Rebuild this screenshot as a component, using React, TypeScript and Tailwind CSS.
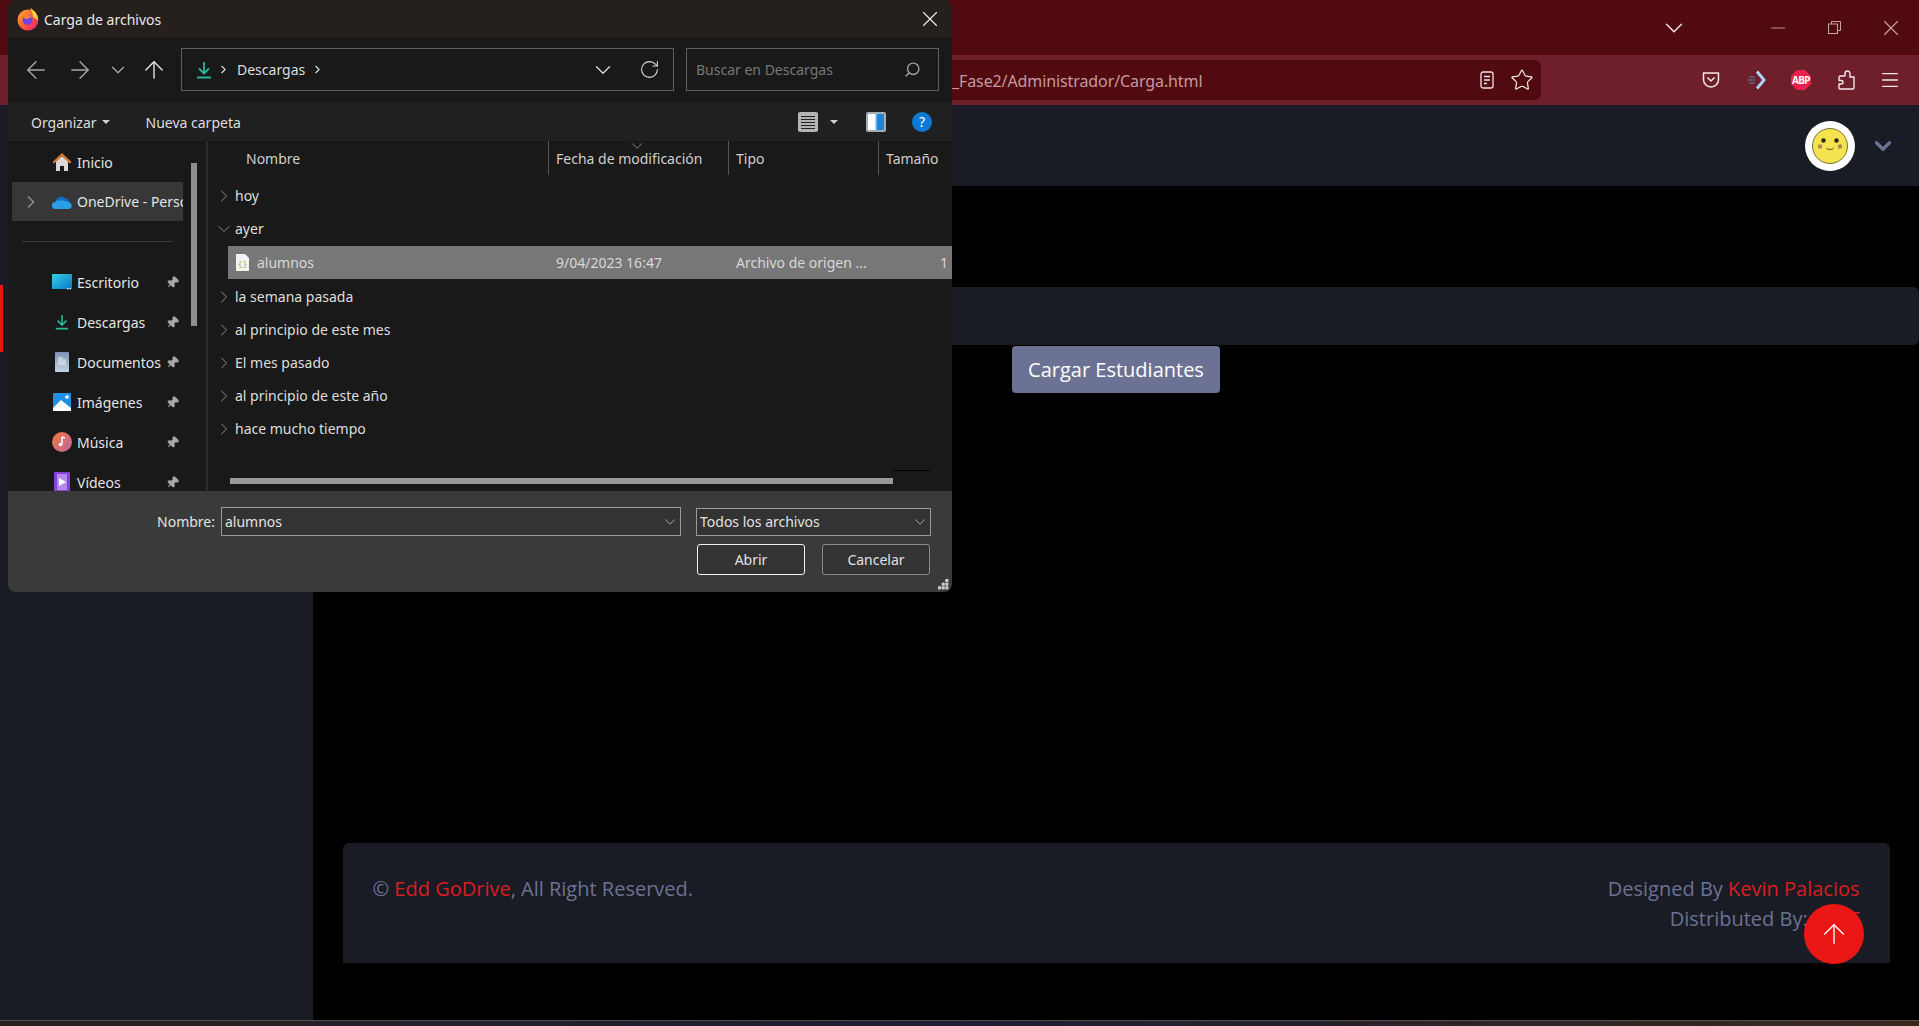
import { ArrowLeft, ArrowRight, ArrowUp, ChevronDown, ChevronRight, RotateCw, Search, X, Minus, Star, Menu, Pin } from 'lucide-react';

const uiFont = 'font-["Noto_Sans",sans-serif]';

// Dialog icons
function FirefoxLogo() {
  return (
    <svg width="24" height="24" viewBox="0 0 24 24">
      <defs>
        <linearGradient id="ff" x1="0" y1="0" x2="1" y2="1">
          <stop offset="0" stopColor="#ffb02e" />
          <stop offset="0.55" stopColor="#ff5a36" />
          <stop offset="1" stopColor="#e31587" />
        </linearGradient>
      </defs>
      <circle cx="12" cy="13" r="10.5" fill="url(#ff)" />
      <path d="M14 1c4 2 8 6 8 12l-5-3c0-3-1-6-3-9z" fill="#ffd23f" />
      <circle cx="11.5" cy="13" r="5" fill="#7542e5" />
      <path d="M7 9c3-2 7-1 9 2-2-1-3 0-5 1-2 0-3-1-4-3z" fill="#ff8a2e" />
    </svg>
  );
}

function DownloadIcon({ size = 18 }: { size?: number }) {
  return (
    <svg width={size} height={size} viewBox="0 0 18 18" fill="none" stroke="#2bb594" strokeWidth="1.8">
      <path d="M9 1v11M4 7.5 9 12.5 14 7.5" />
      <path d="M2 16.5h14" strokeWidth="2" />
    </svg>
  );
}

function HomeIcon() {
  return (
    <svg width="20" height="20" viewBox="0 0 20 20">
      <path d="M4 9.5 10 4l6 5.5V19h-4v-5H8v5H4z" fill="#d9d9d9" />
      <path d="M0.5 10 10 1l9.5 9-1.6 1.5L10 4 2.1 11.5z" fill="#d9762b" />
    </svg>
  );
}

function OneDriveIcon() {
  return (
    <svg width="20" height="14" viewBox="0 0 20 14">
      <path d="M4 7a5 5 0 0 1 9-3.4A4 4 0 0 1 17 7z" fill="#0f6fc6" />
      <path d="M3.5 14a3.5 3.5 0 0 1-.3-7c1-1.500 3-2 4.600-1.300 1.500-.8 3.700-.7 5 .600 1.200-.6 7 .5 7 4.500 0 2-1.300 3.200-3 3.200z" fill="#2a9fe8" />
    </svg>
  );
}

function DesktopIcon() {
  return (
    <svg width="20" height="16" viewBox="0 0 20 16">
      <defs>
        <linearGradient id="desk" x1="0" y1="0" x2="1" y2="1">
          <stop offset="0" stopColor="#35d0e8" />
          <stop offset="1" stopColor="#0a78c8" />
        </linearGradient>
      </defs>
      <rect width="20" height="15" rx="1" fill="url(#desk)" />
      <rect x="15" y="14" width="1.500" height="1.500" fill="#ddd" />
      <rect x="17.500" y="14" width="1.500" height="1.500" fill="#ddd" />
    </svg>
  );
}

function DocumentsIcon() {
  return (
    <svg width="14" height="20" viewBox="0 0 14 20">
      <defs>
        <linearGradient id="docs" x1="0" y1="0" x2="0" y2="1">
          <stop offset="0" stopColor="#7e93b0" />
          <stop offset="1" stopColor="#c3d3e4" />
        </linearGradient>
      </defs>
      <rect width="14" height="20" rx="1" fill="url(#docs)" />
      <path d="M3 6h5M3 8h8M3 10h8M3 12h8" stroke="#f2f2f2" strokeWidth="1" />
    </svg>
  );
}

function PicturesIcon() {
  return (
    <svg width="18" height="18" viewBox="0 0 18 18">
      <rect width="18" height="18" rx="1" fill="#1e90e6" />
      <circle cx="14" cy="4" r="1.800" fill="#fff" />
      <path d="M0 15 8 7l10 8v3H0z" fill="#fff" />
    </svg>
  );
}

function MusicIcon() {
  return (
    <svg width="20" height="20" viewBox="0 0 20 20">
      <defs>
        <linearGradient id="mus" x1="0" y1="0" x2="1" y2="1">
          <stop offset="0" stopColor="#ef7d3c" />
          <stop offset="1" stopColor="#c1609f" />
        </linearGradient>
      </defs>
      <circle cx="10" cy="10" r="10" fill="url(#mus)" />
      <path d="M10 5v7.500M10 5l3 1" stroke="#fff" strokeWidth="1.500" fill="none" />
      <circle cx="8.500" cy="12.500" r="1.800" fill="#fff" />
    </svg>
  );
}

function VideosIcon() {
  return (
    <svg width="16" height="20" viewBox="0 0 16 20">
      <rect width="16" height="20" rx="1" fill="#8b3fd9" />
      <rect x="3" y="2" width="10" height="16" fill="#b58af0" />
      <path d="M5 6v8l7-4z" fill="#fff" />
    </svg>
  );
}

function SourceFileIcon() {
  return (
    <svg width="13" height="17" viewBox="0 0 13 17">
      <path d="M0 0h9l4 4v13H0z" fill="#f3f3f3" />
      <text x="6.500" y="12" textAnchor="middle" fontSize="8" fontFamily="Liberation Mono, monospace" fill="#9ab52e">{'{}'}</text>
    </svg>
  );
}

function Caret() {
  return <span className="inline-block w-0 h-0 border-x-[4px] border-x-transparent border-t-[4px] border-t-[#cfcfcf]" />;
}

function NavItem({ icon, label, pinned, active }: { icon: React.ReactNode; label: string; pinned?: boolean; active?: boolean }) {
  return (
    <div className={`flex items-center overflow-hidden ${active ? 'h-[39px] bg-[#373737]' : 'h-[40px]'}`}>
      <span className="w-[40px] flex shrink-0 pl-[9px]">
        {active && <ChevronRight size={20} strokeWidth={2} color="#8c8c8c" />}
      </span>
      <span className="w-[20px] flex justify-center shrink-0">{icon}</span>
      <span className="ml-[5px] text-[14px] text-[#e4e4e4] whitespace-nowrap">{label}</span>
      {pinned && (
        <span className="ml-auto mr-[4px] flex">
          <Pin size={13} color="#a8a8a8" fill="#a8a8a8" className="rotate-45" />
        </span>
      )}
    </div>
  );
}

function GroupRow({ label, open }: { label: string; open?: boolean }) {
  return (
    <div className="h-[33px] flex items-center pl-[6px]">
      <span className="w-[20px] flex shrink-0">
        {open ? <ChevronDown size={20} strokeWidth={1.200} color="#8a8a8a" /> : <ChevronRight size={20} strokeWidth={1.200} color="#8a8a8a" />}
      </span>
      <span className="ml-[1px] text-[14px] text-[#dedede]">{label}</span>
    </div>
  );
}

function FileDialog() {
  return (
    <div className={`absolute left-[8px] top-0 w-[944px] h-[592px] flex flex-col rounded-lg overflow-hidden ${uiFont}`}>
      {/* title */}
      <div className="h-[38px] bg-[#25201e] flex items-center pl-[8px] pr-[9px] shrink-0">
        <FirefoxLogo />
        <span className="ml-[4px] text-[14px] text-[#e8e8e8]">Carga de archivos</span>
        <X size={26} strokeWidth={1} color="#f2f2f2" className="ml-auto" />
      </div>

      {/* nav */}
      <div className="h-[65px] bg-[#191919] flex items-center pl-[14px] pb-[2px] shrink-0">
        <ArrowLeft size={28} strokeWidth={1.200} color="#a5a5a5" />
        <ArrowRight size={28} strokeWidth={1.200} color="#a5a5a5" className="ml-[16px]" />
        <ChevronDown size={22} strokeWidth={1.500} color="#a5a5a5" className="ml-[13px]" />
        <ArrowUp size={28} strokeWidth={1.200} color="#e4e4e4" className="ml-[11px]" />
        <div className="ml-[13px] w-[493px] h-[43px] border border-[#5f5f5f] flex items-center pl-[13px] pr-[13px]">
          <DownloadIcon />
          <ChevronRight size={13} color="#dcdcdc" className="ml-[4px]" />
          <span className="ml-[7px] text-[14px] text-[#dedede]">Descargas</span>
          <ChevronRight size={13} color="#dcdcdc" className="ml-[6px]" />
          <ChevronDown size={26} strokeWidth={1.200} color="#dcdcdc" className="ml-auto" />
          <RotateCw size={21} strokeWidth={1.200} color="#dcdcdc" className="ml-[23px]" />
        </div>
        <div className="ml-[12px] w-[253px] h-[43px] border border-[#5f5f5f] flex items-center pl-[9px] pr-[17px]">
          <span className="text-[14px] text-[#787878]">Buscar en Descargas</span>
          <Search size={17} strokeWidth={2} color="#a0a0a0" className="ml-auto -scale-x-100" />
        </div>
      </div>

      {/* toolbar */}
      <div className="h-[38px] bg-[#202020] flex items-center pl-[23px] pr-[20px] shrink-0">
        <span className="text-[14px] text-[#dedede]">Organizar</span>
        <span className="ml-[5px] flex"><Caret /></span>
        <span className="ml-[36px] text-[14px] text-[#dedede]">Nueva carpeta</span>
        <div className="ml-auto w-[20px] h-[20px] rounded-[2px] bg-[#b4b4b4] flex flex-col justify-center gap-[2px] px-[3px]">
          <span className="h-[1px] bg-[#222]" />
          <span className="h-[1px] bg-[#222]" />
          <span className="h-[1px] bg-[#222]" />
          <span className="h-[1px] bg-[#222]" />
          <span className="h-[1px] bg-[#222]" />
        </div>
        <span className="ml-[12px] flex"><Caret /></span>
        <div className="ml-[28px] w-[20px] h-[20px] rounded-[2px] border-2 border-[#a5adb5] bg-gradient-to-r from-white from-40% to-[#1b86d8] to-60%" />
        <div className="ml-[26px] w-[20px] h-[20px] rounded-full bg-[#0f7ad6] text-white text-[14px] leading-[20px] text-center">?</div>
      </div>

      {/* body */}
      <div className="h-[350px] bg-[#191919] flex shrink-0">
        {/* left nav */}
        <div className="w-[198px] h-full flex shrink-0 overflow-hidden">
          <div className="w-[171px] ml-[4px] shrink-0">
            <div className="mt-[1px]"><NavItem icon={<HomeIcon />} label="Inicio" /></div>
            <NavItem icon={<OneDriveIcon />} label="OneDrive - Personal" active />
            <div className="h-[41px] flex items-center pl-[10px] pr-[10px]"><div className="h-px w-full bg-[#3a3a3a]" /></div>
            <NavItem icon={<DesktopIcon />} label="Escritorio" pinned />
            <NavItem icon={<DownloadIcon size={16} />} label="Descargas" pinned />
            <NavItem icon={<DocumentsIcon />} label="Documentos" pinned />
            <NavItem icon={<PicturesIcon />} label="Imágenes" pinned />
            <NavItem icon={<MusicIcon />} label="Música" pinned />
            <NavItem icon={<VideosIcon />} label="Vídeos" pinned />
          </div>
          <div className="ml-[8px] mt-[22px] w-[6px] h-[163px] bg-[#8f8f8f] shrink-0" />
        </div>
        <div className="w-[2px] h-full bg-[#2b2b2b] shrink-0" />

        {/* files */}
        <div className="flex-1 min-w-0 flex flex-col">
          <div className="h-[34px] mb-[4px] flex items-stretch text-[14px] text-[#cfcfcf] shrink-0 relative">
            <div className="w-[340px] pl-[38px] flex items-center">Nombre</div>
            <div className="w-[180px] pl-[7px] flex items-center border-l border-[#555]">Fecha de modificación</div>
            <div className="w-[150px] pl-[7px] flex items-center border-l border-[#555]">Tipo</div>
            <div className="flex-1 pl-[7px] flex items-center border-l border-[#555] whitespace-nowrap">Tamaño</div>
            <ChevronDown size={18} strokeWidth={1} color="#a5a5a5" className="absolute left-[420px] -top-[4px]" />
          </div>
          <GroupRow label="hoy" />
          <GroupRow label="ayer" open />
          <div className="ml-[20px] h-[33px] mt-[1px] mb-[1px] bg-[#777777] flex items-center text-[14px] text-[#d8d8d8] whitespace-nowrap overflow-hidden shrink-0">
            <span className="ml-[8px] flex"><SourceFileIcon /></span>
            <span className="ml-[8px] w-[299px] shrink-0">alumnos</span>
            <span className="w-[180px] shrink-0">9/04/2023 16:47</span>
            <span className="w-[204px] shrink-0">Archivo de origen ...</span>
            <span>1</span>
          </div>
          <GroupRow label="la semana pasada" />
          <GroupRow label="al principio de este mes" />
          <GroupRow label="El mes pasado" />
          <GroupRow label="al principio de este año" />
          <GroupRow label="hace mucho tiempo" />
          <div className="ml-[22px] mt-[33px] flex items-start">
            <div className="w-[663px] h-[6px] bg-[#999999]" />
            <div className="w-[37px] h-px bg-black -mt-[8px]" />
          </div>
        </div>
      </div>

      {/* bottom */}
      <div className="flex-1 bg-[#3a3a3a] text-[14px] text-[#e2e2e2] relative">
        <div className="flex items-center mt-[16px] h-[29px]">
          <span className="w-[207px] text-right">Nombre:</span>
          <div className="ml-[6px] w-[460px] h-[29px] border border-[#9a9a9a] bg-[#333333] flex items-center pl-[3px] pr-[1px]">
            alumnos
            <ChevronDown size={18} strokeWidth={1} color="#cfcfcf" className="ml-auto" />
          </div>
          <div className="ml-[15px] w-[235px] h-[28px] border border-[#9a9a9a] bg-[#333333] flex items-center pl-[3px] pr-[1px]">
            Todos los archivos
            <ChevronDown size={18} strokeWidth={1} color="#cfcfcf" className="ml-auto" />
          </div>
        </div>
        <div className="flex justify-end mt-[8px] pr-[22px] gap-[17px]">
          <div className="w-[108px] h-[31px] rounded-[3px] border border-[#f0f0f0] bg-[#333333] flex items-center justify-center">Abrir</div>
          <div className="w-[108px] h-[31px] rounded-[3px] border border-[#8a8a8a] bg-[#333333] flex items-center justify-center">Cancelar</div>
        </div>
        <svg width="11" height="11" viewBox="0 0 9 9" className="absolute right-[3px] bottom-[2px]" fill="#d0d0d0">
          <rect x="6" y="0" width="2.500" height="2.500" />
          <rect x="3" y="3" width="2.500" height="2.500" />
          <rect x="6" y="3" width="2.500" height="2.500" />
          <rect x="0" y="6" width="2.500" height="2.500" />
          <rect x="3" y="6" width="2.500" height="2.500" />
          <rect x="6" y="6" width="2.500" height="2.500" />
        </svg>
      </div>
    </div>
  );
}

function PocketIcon() {
  return (
    <svg width="18" height="16" viewBox="0 0 18 16" fill="none" stroke="#f6e8ea" strokeWidth="1.500">
      <path d="M1.500 1h15v6.500a7.500 7.500 0 0 1-15 0z" strokeLinejoin="round" />
      <path d="M5.500 5.500 9 9l3.500-3.500" />
    </svg>
  );
}

function ExtensionIcon() {
  return (
    <svg width="17" height="20" viewBox="0 0 17 20" fill="none" stroke="#f6e8ea" strokeWidth="1.400" strokeLinejoin="round" className="ml-[27px]">
      <path d="M2 19H14.500a1.500 1.500 0 0 0 1.500-1.500V7H12V3.500a2.500 2.500 0 0 0-5 0V6H2.500A1.500 1.500 0 0 0 1 7.500V10.500H3.500A1.500 1.500 0 0 1 5 12v.5A1.500 1.500 0 0 1 3.500 14H1v4a1 1 0 0 0 1 1z" />
    </svg>
  );
}

function SmileyAvatar() {
  return (
    <div className="w-[50px] h-[50px] rounded-full bg-white flex items-center justify-center">
      <svg width="36" height="36" viewBox="0 0 36 36">
        <circle cx="18" cy="18" r="17.500" fill="#f5e34f" stroke="#55501c" strokeWidth="0.800" />
        <circle cx="11.500" cy="12.500" r="2.200" fill="#2a2a1c" />
        <circle cx="24.500" cy="12.500" r="2.200" fill="#2a2a1c" />
        <circle cx="8" cy="18.500" r="2.200" fill="#a9865a" />
        <circle cx="28" cy="18.500" r="2.200" fill="#a9865a" />
        <path d="M14.500 20c1 2 5.500 2 7 0" stroke="#2a2a1c" strokeWidth="0.800" fill="none" />
      </svg>
    </div>
  );
}

export default function App() {
  return (
    <div className={`relative w-full h-[1026px] overflow-hidden flex flex-col bg-black ${uiFont}`}>
      {/* Browser tab strip */}
      <div className="h-[55px] bg-[#500a10] flex items-center justify-end pr-[15px] shrink-0">
        <ChevronDown size={30} strokeWidth={1.200} color="#f3e3e5" />
        <Minus size={22} strokeWidth={1} color="#c9a3a7" className="ml-[78px]" />
        <svg width="13" height="13" viewBox="0 0 13 13" fill="none" stroke="#c9a3a7" strokeWidth="1" className="ml-[39px]">
          <rect x="0.500" y="3" width="9" height="9.500" />
          <path d="M3.500 3V.5h9v9H9.500" />
        </svg>
        <X size={26} strokeWidth={1} color="#c9a3a7" className="ml-[37px]" />
      </div>

      {/* Browser toolbar */}
      <div className="h-[50px] bg-[#6e1f2b] flex items-center shrink-0 pr-[18px]">
        <div className="ml-[952px] w-[589px] h-[40px] bg-[#500a10] rounded-r-md flex items-center pr-[7px] shrink-0">
          <span className="pt-[1px] text-[16px] text-[#c9989e] tracking-[-0.1px] whitespace-nowrap">_Fase2/Administrador/Carga.html</span>
          <svg width="14" height="18" viewBox="0 0 14 18" fill="none" stroke="#f3e3e5" strokeWidth="1.300" className="ml-auto">
            <rect x="1" y="1" width="12" height="16" rx="2" />
            <path d="M4 5.500h6M4 9h6M4 12.500h3" />
          </svg>
          <Star size={24} strokeWidth={1.200} color="#f6e8ea" className="ml-[16px]" />
        </div>
        <div className="ml-auto flex items-center">
          <PocketIcon />
          <svg width="20" height="20" viewBox="0 0 20 20" fill="none" className="ml-[28px]">
            <path d="M1 7h6M0 10h7M1 13h6" stroke="#5b6b86" strokeWidth="1.500" />
            <path d="M9 1.500 16 10l-7 8.500" stroke="#a8d4f5" strokeWidth="3" />
          </svg>
          <div className="ml-[23px] w-[20px] h-[20px] bg-[#e8214f] [clip-path:polygon(30%_0,70%_0,100%_30%,100%_70%,70%_100%,30%_100%,0_70%,0_30%)] flex items-center justify-center text-[10px] font-bold tracking-[-0.6px] text-white">ABP</div>
          <ExtensionIcon />
          <Menu size={22} strokeWidth={1.400} color="#f6e8ea" className="ml-[24px]" />
        </div>
      </div>

      {/* Page header */}
      <div className="h-[81px] bg-[#191c24] flex items-center justify-end pr-[23px] shrink-0">
        <SmileyAvatar />
        <ChevronDown size={26} strokeWidth={3} color="#6c7293" className="ml-[15px]" />
      </div>

      {/* Page body */}
      <div className="flex-1 flex min-h-0">
        <aside className="w-[313px] bg-[#191c24] shrink-0 relative">
          <div className="absolute left-0 top-[99px] w-[3px] h-[67px] bg-[#eb1616]" />
        </aside>
        <main className={`flex-1 flex flex-col items-center font-["Open_Sans",sans-serif]`}>
          <div className="mt-[101px] h-[58px] w-full bg-[#191c24] rounded-md" />
          <button className="mt-[1px] w-[208px] h-[47px] rounded-[4px] bg-[#6c7293] text-white text-[20px]">Cargar Estudiantes</button>
          <footer className="mt-[450px] w-[1547px] h-[120px] bg-[#191c24] rounded-t-md flex justify-between px-[30px] pt-[31px] text-[20px] leading-[30px] text-[#6c7293]">
            <div>© <span className="text-[#db1c20]">Edd GoDrive</span>, All Right Reserved.</div>
            <div className="text-right">
              Designed By <span className="text-[#db1c20]">Kevin Palacios</span>
              <br />
              Distributed By: <span className="text-[#db1c20]">EddT</span>
            </div>
          </footer>
        </main>
      </div>

      {/* Taskbar sliver */}
      <div className="h-[6px] border-t border-[#55504c] bg-gradient-to-r from-[#2a2020] via-[#1d1d33] to-[#3a281c] shrink-0" />

      {/* Back to top */}
      <div className="absolute left-[1804px] top-[904px] w-[60px] h-[60px] rounded-full bg-[#eb1616] flex items-center justify-center">
        <ArrowUp size={32} strokeWidth={1} color="#ffffff" />
      </div>

      <FileDialog />
    </div>
  );
}
